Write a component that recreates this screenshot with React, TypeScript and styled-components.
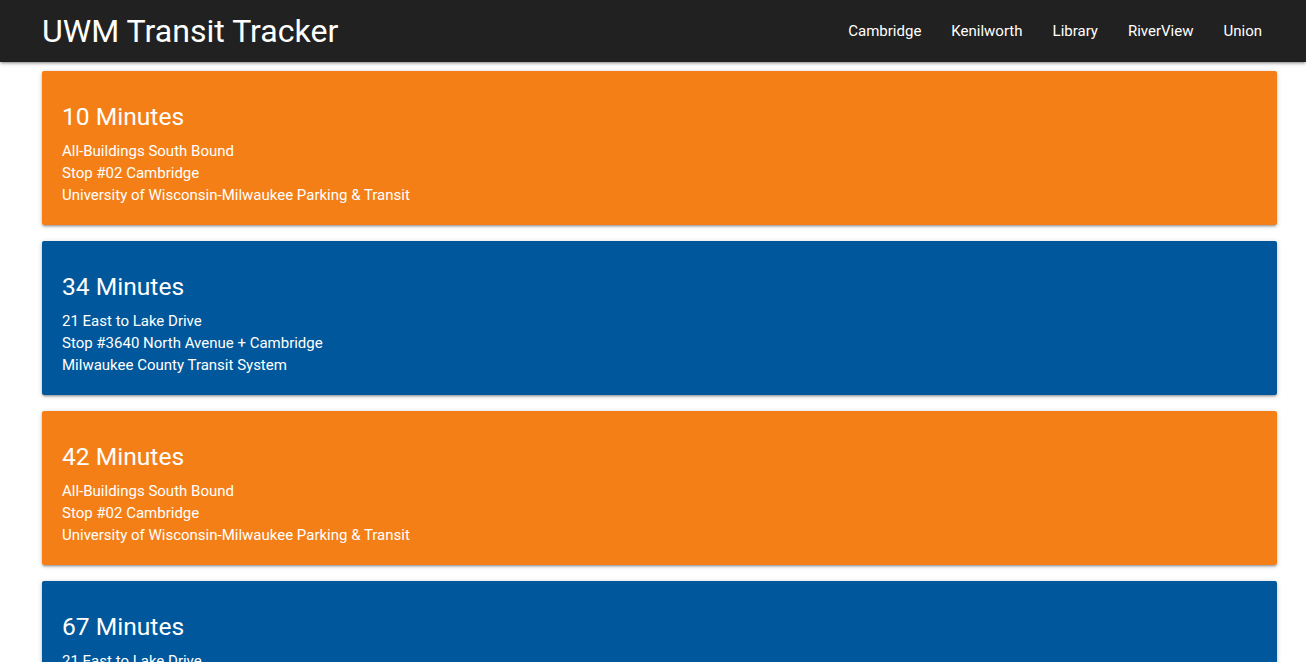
import React from "react";
import styled, { createGlobalStyle } from "styled-components";

const GlobalStyle = createGlobalStyle`
  html { scrollbar-width: none; }
  html::-webkit-scrollbar { display: none; }
  body {
    margin: 0;
    background: #ffffff;
    font-family: Roboto, "Liberation Sans", Arial, sans-serif;
    font-size: 15px;
    line-height: 1.5;
    color: rgba(0, 0, 0, 0.87);
  }
  * { box-sizing: border-box; }
`;

const NavBar = styled.nav`
  height: 62px;
  background: #212121;
  color: #ffffff;
  box-shadow: 0 2px 2px 0 rgba(0, 0, 0, 0.14), 0 3px 1px -2px rgba(0, 0, 0, 0.12),
    0 1px 5px 0 rgba(0, 0, 0, 0.2);
  position: relative;
  z-index: 2;
`;

const NavInner = styled.div`
  height: 100%;
  padding: 0 29px 0 42px;
  display: flex;
  align-items: center;
  justify-content: space-between;
`;

const Brand = styled.a`
  font-size: 32.1px;
  line-height: 62px;
  color: #ffffff;
  text-decoration: none;
  white-space: nowrap;
`;

const NavLinks = styled.ul`
  list-style: none;
  margin: 0;
  padding: 0;
  display: flex;
`;

const NavLink = styled.a`
  display: block;
  padding: 0 15px;
  line-height: 62px;
  font-size: 15px;
  color: #ffffff;
  text-decoration: none;
`;

const Container = styled.main`
  padding: 9px 29px 0 42px;
  display: flex;
  flex-direction: column;
  gap: 16px;
`;

const CardPanel = styled.section<{ $tone: "orange" | "blue" }>`
  background: ${(p) => (p.$tone === "orange" ? "#f57f17" : "#01579b")};
  color: #ffffff;
  padding: 20px 20px 19px;
  border-radius: 2px;
  box-shadow: 0 2px 2px 0 rgba(0, 0, 0, 0.14), 0 3px 1px -2px rgba(0, 0, 0, 0.12),
    0 1px 5px 0 rgba(0, 0, 0, 0.2);
`;

const Minutes = styled.h5`
  font-size: 24.6px;
  font-weight: 400;
  line-height: 1.1;
  margin: 12px 0 10px;
`;

const Line = styled.div`
  font-size: 15px;
  line-height: 22px;
`;

type Arrival = {
  minutes: number;
  route: string;
  stop: string;
  agency: string;
  tone: "orange" | "blue";
};

const arrivals: Arrival[] = [
  {
    minutes: 10,
    route: "All-Buildings South Bound",
    stop: "Stop #02 Cambridge",
    agency: "University of Wisconsin-Milwaukee Parking & Transit",
    tone: "orange",
  },
  {
    minutes: 34,
    route: "21 East to Lake Drive",
    stop: "Stop #3640 North Avenue + Cambridge",
    agency: "Milwaukee County Transit System",
    tone: "blue",
  },
  {
    minutes: 42,
    route: "All-Buildings South Bound",
    stop: "Stop #02 Cambridge",
    agency: "University of Wisconsin-Milwaukee Parking & Transit",
    tone: "orange",
  },
  {
    minutes: 67,
    route: "21 East to Lake Drive",
    stop: "Stop #3640 North Avenue + Cambridge",
    agency: "Milwaukee County Transit System",
    tone: "blue",
  },
];

const links = ["Cambridge", "Kenilworth", "Library", "RiverView", "Union"];

export default function App() {
  return (
    <>
      <GlobalStyle />
      <NavBar>
        <NavInner>
          <Brand href="#">UWM Transit Tracker</Brand>
          <NavLinks>
            {links.map((l) => (
              <li key={l}>
                <NavLink href="#">{l}</NavLink>
              </li>
            ))}
          </NavLinks>
        </NavInner>
      </NavBar>
      <Container>
        {arrivals.map((a, i) => (
          <CardPanel key={i} $tone={a.tone}>
            <Minutes>{a.minutes} Minutes</Minutes>
            <Line>{a.route}</Line>
            <Line>{a.stop}</Line>
            <Line>{a.agency}</Line>
          </CardPanel>
        ))}
      </Container>
    </>
  );
}
